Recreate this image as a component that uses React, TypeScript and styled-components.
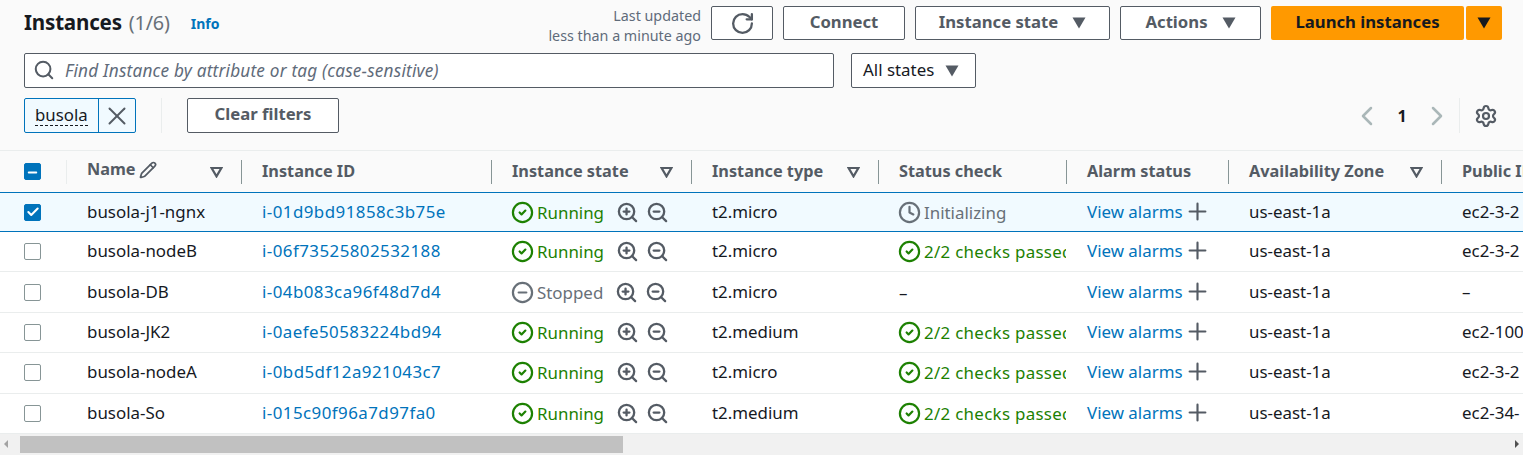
import React from 'react';
import styled, { createGlobalStyle } from 'styled-components';
import {
  Check,
  CircleCheck,
  CircleMinus,
  Clock,
  Minus,
  Pencil,
  Plus,
  RotateCw,
  Search,
  Settings,
  ChevronLeft,
  ChevronRight,
  X,
  ZoomIn,
  ZoomOut,
} from 'lucide-react';

const GlobalStyle = createGlobalStyle`
  html, body {
    margin: 0;
    height: 100%;
    overflow: hidden;
    background: #fafafa;
  }
  * { box-sizing: border-box; }
  body {
    font-family: "Noto Sans", "Open Sans", sans-serif;
    color: #16191f;
  }
`;

const COLUMNS = '67px 175px 250px 200px 187px 188px 162px 213px 200px';
const BLUE = '#0073bb';
const GREEN = '#1d8102';
const GREY = '#687078';

const Page = styled.div`
  width: 1523px;
  height: 455px;
  display: flex;
  flex-direction: column;
`;

const Header = styled.div`
  height: 150px;
  padding: 6px 21px 0 24px;
  display: flex;
  flex-direction: column;
`;

const TopRow = styled.div`
  height: 34px;
  display: flex;
  align-items: center;
`;

const Title = styled.h1`
  margin: 0 0 2px;
  font-size: 20.6px;
  font-weight: 700;
  line-height: 32px;
  color: #16191f;
  letter-spacing: -0.2px;

  span {
    font-size: 19.8px;
    font-weight: 400;
    color: ${GREY};
    margin-left: 7px;
  }
`;

const InfoLink = styled.a`
  margin-left: 21px;
  font-size: 14px;
  font-weight: 700;
  color: ${BLUE};
`;

const Updated = styled.div`
  margin: 6px 10px 0 auto;
  font-size: 14.3px;
  line-height: 20px;
  color: #5f6b7a;
  text-align: right;
`;

const Actions = styled.div`
  display: flex;
  gap: 10px;
`;

const Button = styled.button<{ $width: number; $height?: number }>`
  width: ${(p) => p.$width}px;
  height: ${(p) => p.$height ?? 34}px;
  padding: 0 0 4px;
  display: flex;
  align-items: center;
  justify-content: center;
  gap: 14px;
  background: #fff;
  border: 1px solid #545b64;
  border-radius: 2px;
  font: 700 16.7px "Noto Sans", sans-serif;
  color: #545b64;

  svg {
    margin-top: 4px;
  }
`;

const SplitButton = styled.div`
  display: flex;
  gap: 2px;
`;

const Primary = styled.button<{ $width: number }>`
  width: ${(p) => p.$width}px;
  height: 34px;
  padding: 0 0 4px;
  display: flex;
  align-items: center;
  justify-content: center;
  background: #ff9900;
  border: none;
  border-radius: 2px;
  font: 700 16.7px "Noto Sans", sans-serif;
  color: #16191f;

  svg {
    margin-top: 4px;
  }
`;

const SearchRow = styled.div`
  margin-top: 13px;
  display: flex;
  gap: 17px;
`;

const SearchBox = styled.div`
  width: 810px;
  height: 35px;
  padding: 0 0 1px 8px;
  display: flex;
  align-items: center;
  gap: 10px;
  background: #fff;
  border: 1px solid #545b64;
  border-radius: 2px;
  font-size: 17.2px;
  letter-spacing: 0.2px;
  font-style: italic;
  color: #5f6b7a;
`;

const Select = styled.div`
  width: 125px;
  height: 35px;
  padding: 0 0 2px 11px;
  display: flex;
  align-items: center;
  gap: 11px;
  background: #fff;
  border: 1px solid #545b64;
  border-radius: 2px;
  font-size: 16.9px;
  color: #16191f;

  svg {
    margin-top: 2px;
  }
`;

const FilterRow = styled.div`
  margin-top: 10px;
  display: flex;
  align-items: center;
`;

const Chip = styled.div`
  width: 112px;
  height: 35px;
  display: flex;
  background: #f1faff;
  border: 1px solid ${BLUE};
  border-radius: 2px;
`;

const ChipLabel = styled.div`
  width: 73px;
  padding: 0 0 1px 10px;
  display: flex;
  align-items: center;
  font-size: 16.8px;
  color: #16191f;

  span {
    border-bottom: 1px dashed #16191f;
    line-height: 20px;
  }
`;

const ChipClose = styled.div`
  flex: 1;
  display: flex;
  align-items: center;
  justify-content: center;
  border-left: 1px solid ${BLUE};
  color: #545b64;
`;

const FilterDivider = styled.div`
  width: 1px;
  height: 35px;
  margin: 0 25px;
  background: #eaeded;
`;

const Pagination = styled.div`
  margin-left: auto;
  margin-right: 4px;
  display: flex;
  align-items: center;
  color: #aab7b8;
`;

const PageNumber = styled.span`
  width: 38px;
  text-align: center;
  font-size: 16px;
  font-weight: 700;
  color: #16191f;
`;

const PageDivider = styled.div`
  width: 1px;
  height: 35px;
  margin: 0 14px 0 6px;
  background: #eaeded;
`;

const GearWrap = styled.div`
  display: flex;
  color: #545b64;
`;

const HeadRow = styled.div`
  height: 42px;
  display: grid;
  grid-template-columns: ${COLUMNS};
  background: #fafafa;
  border-top: 1px solid #eaeded;
  overflow: hidden;
`;

const HeadCell = styled.div`
  padding: 0 19px 2px 20px;
  display: flex;
  align-items: center;
  justify-content: space-between;
  white-space: nowrap;
  font-size: 16.3px;
  font-weight: 700;
  color: #545b64;
  position: relative;

  &::after {
    content: '';
    position: absolute;
    right: 0;
    top: 9px;
    bottom: 8px;
    width: 1px;
    background: #879596;
  }

  svg {
    margin-top: 2px;
  }
`;

const CheckHead = styled(HeadCell)`
  padding: 0 0 0 24px;

  &::after {
    background: #eaeded;
  }
`;

const NameLabel = styled.span`
  display: flex;
  align-items: center;
  gap: 3px;
  margin-top: -3px;
`;

const Body = styled.div`
  display: flex;
  flex-direction: column;
  flex: 1;
  min-height: 0;
`;

const Row = styled.div<{ $selected?: boolean }>`
  height: ${(p) => (p.$selected ? 40 : 40.4)}px;
  display: grid;
  grid-template-columns: ${COLUMNS};
  align-items: center;
  background: ${(p) => (p.$selected ? '#f1faff' : '#fff')};
  border-top: ${(p) => (p.$selected ? `1px solid ${BLUE}` : 'none')};
  border-bottom: 1px solid ${(p) => (p.$selected ? BLUE : '#eaeded')};
  overflow: hidden;
`;

const Cell = styled.div`
  padding: 0 0 2px 20px;
  overflow: hidden;
  white-space: nowrap;
  font-size: 16.9px;
  color: #16191f;
  display: flex;
  align-items: center;
`;

const CheckCell = styled(Cell)`
  padding: 0 0 0 24px;
`;

const StatusCell = styled(Cell)`
  padding-bottom: 0;
`;

const ClippedCell = styled(StatusCell)`
  margin-right: 1px;
`;

const Box = styled.div<{ $checked?: boolean }>`
  width: 17px;
  height: 17px;
  flex: none;
  display: flex;
  align-items: center;
  justify-content: center;
  border: 1px solid ${(p) => (p.$checked ? BLUE : '#879596')};
  border-radius: 2px;
  background: ${(p) => (p.$checked ? BLUE : '#fff')};
  color: #fff;
`;

const Link = styled.a`
  color: ${BLUE};
`;

const IdLink = styled(Link)`
  letter-spacing: 0.45px;
`;

const StatusText = styled.span<{ $tone: string; $spaced?: boolean }>`
  display: flex;
  align-items: center;
  gap: 3px;
  color: ${(p) => p.$tone};
  letter-spacing: ${(p) => (p.$spaced ? '0.3px' : 'normal')};

  svg {
    flex: none;
    margin-left: -1px;
  }
`;

const ZoomIcons = styled.span`
  margin-left: 12px;
  display: flex;
  gap: 7px;
  color: #545b64;
`;

const AddIcon = styled.span`
  margin-left: 1px;
  display: flex;
  color: #545b64;
`;

const ScrollTrack = styled.div`
  flex: 1;
  min-height: 21px;
  display: flex;
  align-items: center;
  background: #f1f1f1;
  padding: 2px 4px;
`;

const ScrollThumb = styled.div`
  width: 603px;
  height: 17px;
  margin-left: 12px;
  background: #c1c1c1;
`;

const Arrow = styled.div<{ $dir: 'left' | 'right' }>`
  width: 0;
  height: 0;
  border-top: 4px solid transparent;
  border-bottom: 4px solid transparent;
  ${(p) =>
    p.$dir === 'left'
      ? 'border-right: 4px solid #a3a3a3;'
      : 'border-left: 4px solid #505050; margin-left: auto;'}
`;

const Caret = ({ color = '#545b64' }: { color?: string }) => (
  <svg width="14" height="12" viewBox="0 0 14 12">
    <path d="M0.5 0.5h13L7 11.5z" fill={color} />
  </svg>
);

const SortIcon = () => (
  <svg width="13" height="12" viewBox="0 0 13 12">
    <path d="M1.6 2h9.8L6.5 10.4z" fill="none" stroke="#545b64" strokeWidth="2.2" />
  </svg>
);

type Instance = {
  name: string;
  id: string;
  state: 'Running' | 'Stopped';
  type: string;
  check: 'passed' | 'init' | 'none';
  dns: string;
};

const instances: Instance[] = [
  { name: 'busola-j1-ngnx', id: 'i-01d9bd91858c3b75e', state: 'Running', type: 't2.micro', check: 'init', dns: 'ec2-3-2' },
  { name: 'busola-nodeB', id: 'i-06f73525802532188', state: 'Running', type: 't2.micro', check: 'passed', dns: 'ec2-3-2' },
  { name: 'busola-DB', id: 'i-04b083ca96f48d7d4', state: 'Stopped', type: 't2.micro', check: 'none', dns: '–' },
  { name: 'busola-JK2', id: 'i-0aefe50583224bd94', state: 'Running', type: 't2.medium', check: 'passed', dns: 'ec2-100' },
  { name: 'busola-nodeA', id: 'i-0bd5df12a921043c7', state: 'Running', type: 't2.micro', check: 'passed', dns: 'ec2-3-2' },
  { name: 'busola-So', id: 'i-015c90f96a7d97fa0', state: 'Running', type: 't2.medium', check: 'passed', dns: 'ec2-34-' },
];

const CheckStatus = ({ check }: { check: Instance['check'] }) => {
  if (check === 'none') return <span>–</span>;
  if (check === 'init') {
    return (
      <StatusText $tone={GREY}>
        <Clock size={23} strokeWidth={2.3} />
        Initializing
      </StatusText>
    );
  }
  return (
    <StatusText $tone={GREEN} $spaced>
      <CircleCheck size={23} strokeWidth={2.3} />
      2/2 checks passed
    </StatusText>
  );
};

export default function App() {
  return (
    <Page>
      <GlobalStyle />
      <Header>
        <TopRow>
          <Title>
            Instances<span>(1/6)</span>
          </Title>
          <InfoLink>Info</InfoLink>
          <Updated>
            Last updated
            <br />
            less than a minute ago
          </Updated>
          <Actions>
            <Button $width={62}>
              <RotateCw size={25} strokeWidth={2.2} />
            </Button>
            <Button $width={122}>Connect</Button>
            <Button $width={195}>
              Instance state <Caret />
            </Button>
            <Button $width={141}>
              Actions <Caret />
            </Button>
            <SplitButton>
              <Primary $width={193}>Launch instances</Primary>
              <Primary $width={36}>
                <Caret color="#16191f" />
              </Primary>
            </SplitButton>
          </Actions>
        </TopRow>
        <SearchRow>
          <SearchBox>
            <Search size={22} strokeWidth={2.2} color="#545b64" />
            Find Instance by attribute or tag (case-sensitive)
          </SearchBox>
          <Select>
            All states <Caret />
          </Select>
        </SearchRow>
        <FilterRow>
          <Chip>
            <ChipLabel>
              <span>busola</span>
            </ChipLabel>
            <ChipClose>
              <X size={30} strokeWidth={1.6} />
            </ChipClose>
          </Chip>
          <FilterDivider />
          <Button $width={152} $height={35}>
            Clear filters
          </Button>
          <Pagination>
            <ChevronLeft size={32} strokeWidth={1.9} />
            <PageNumber>1</PageNumber>
            <ChevronRight size={32} strokeWidth={1.9} />
            <PageDivider />
            <GearWrap>
              <Settings size={24} strokeWidth={2.2} />
            </GearWrap>
          </Pagination>
        </FilterRow>
      </Header>

      <HeadRow>
        <CheckHead>
          <Box $checked>
            <Minus size={13} strokeWidth={3.5} />
          </Box>
        </CheckHead>
        <HeadCell>
          <NameLabel>
            Name <Pencil size={18} strokeWidth={2.3} />
          </NameLabel>
          <SortIcon />
        </HeadCell>
        <HeadCell>Instance ID</HeadCell>
        <HeadCell>
          Instance state <SortIcon />
        </HeadCell>
        <HeadCell>
          Instance type <SortIcon />
        </HeadCell>
        <HeadCell>Status check</HeadCell>
        <HeadCell>Alarm status</HeadCell>
        <HeadCell>
          Availability Zone <SortIcon />
        </HeadCell>
        <HeadCell>Public IPv4 DNS</HeadCell>
      </HeadRow>

      <Body>
        {instances.map((item, index) => (
          <Row key={item.id} $selected={index === 0}>
            <CheckCell>
              <Box $checked={index === 0}>
                {index === 0 && <Check size={14} strokeWidth={3.5} />}
              </Box>
            </CheckCell>
            <Cell>{item.name}</Cell>
            <Cell>
              <IdLink>{item.id}</IdLink>
            </Cell>
            <StatusCell>
              <StatusText $tone={item.state === 'Running' ? GREEN : GREY}>
                {item.state === 'Running' ? (
                  <CircleCheck size={23} strokeWidth={2.3} />
                ) : (
                  <CircleMinus size={23} strokeWidth={2.3} />
                )}
                {item.state}
              </StatusText>
              <ZoomIcons>
                <ZoomIn size={23} strokeWidth={2.4} />
                <ZoomOut size={23} strokeWidth={2.4} />
              </ZoomIcons>
            </StatusCell>
            <Cell>{item.type}</Cell>
            <ClippedCell>
              <CheckStatus check={item.check} />
            </ClippedCell>
            <Cell>
              <Link>View alarms</Link>
              <AddIcon>
                <Plus size={27} strokeWidth={1.9} />
              </AddIcon>
            </Cell>
            <Cell>us-east-1a</Cell>
            <Cell>{item.dns}</Cell>
          </Row>
        ))}
        <ScrollTrack>
          <Arrow $dir="left" />
          <ScrollThumb />
          <Arrow $dir="right" />
        </ScrollTrack>
      </Body>
    </Page>
  );
}
